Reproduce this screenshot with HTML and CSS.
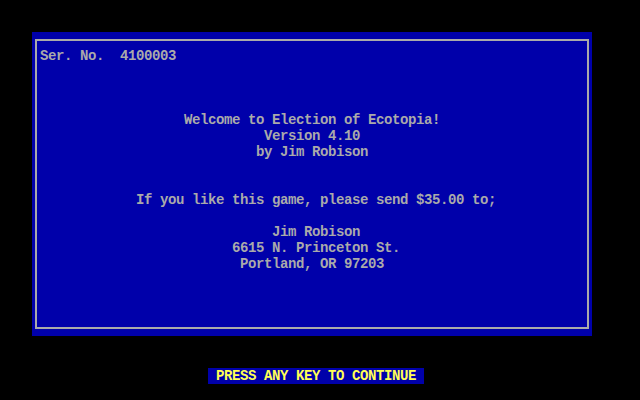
FILE: index.html
```html
<!DOCTYPE html>
<html>
<head>
<meta charset="utf-8">
<link rel="stylesheet" href="styles.css">
</head>
<body>
<div class="screen">
  <div class="panel">
    <div class="frame">
<pre class="text">Ser. No.  4100003



                  Welcome to Election of Ecotopia!
                            Version 4.10
                           by Jim Robison


            If you like this game, please send $35.00 to;

                             Jim Robison
                        6615 N. Princeton St.
                         Portland, OR 97203</pre>
    </div>
  </div>
  <div class="footer"><span class="prompt"> PRESS ANY KEY TO CONTINUE </span></div>
</div>
</body>
</html>
```
FILE: styles.css
```css
html, body {
  margin: 0;
  padding: 0;
  background: #000;
}
.screen {
  width: 640px;
  height: 400px;
  background: #000;
  padding-top: 32px;
  box-sizing: border-box;
  font-family: "Liberation Mono", "DejaVu Sans Mono", monospace;
  font-weight: bold;
  font-size: 14px;
  letter-spacing: -0.4px;
  line-height: 16px;
}
.panel {
  margin-left: 32px;
  width: 560px;
  height: 304px;
  background: #0000aa;
  padding: 7px 3px;
  box-sizing: border-box;
}
.frame {
  height: 100%;
  border: 2px solid #aaaaaa;
  box-sizing: border-box;
  padding: 7px 0 0 3px;
}
.text {
  margin: 0;
  font: inherit;
  color: #aaaaaa;
  white-space: pre;
}
.footer {
  margin-top: 32px;
  padding-left: 208px;
  height: 16px;
}
.prompt {
  display: inline-block;
  background: #0000aa;
  color: #ffff55;
  white-space: pre;
  height: 16px;
}
```
